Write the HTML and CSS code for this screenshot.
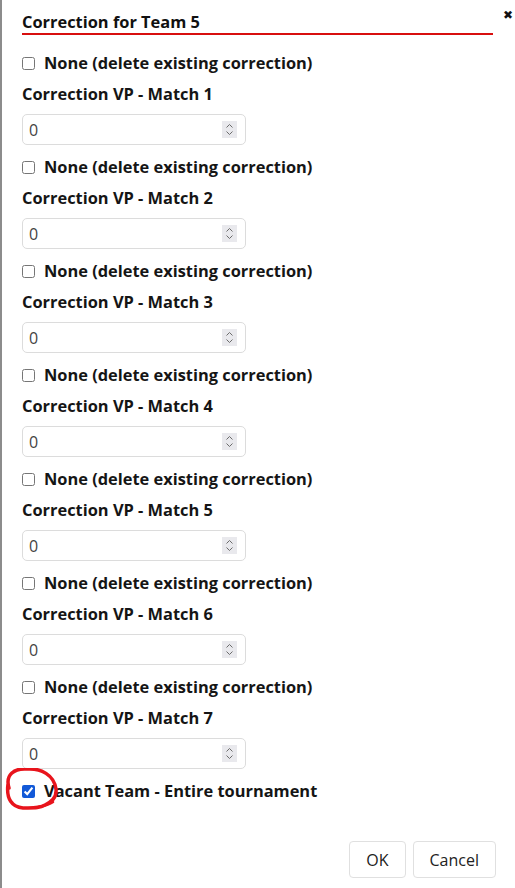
FILE: index.html
```html
<!DOCTYPE html>
<html>
<head>
<meta charset="utf-8">
<link rel="stylesheet" href="styles.css">
</head>
<body>
<div class="dialog">
  <div class="top">
    <h2 class="title">Correction for Team 5</h2>
    <span class="close">&#x2716;</span>
  </div>
  <div class="form">
    <div class="group">
      <label class="check"><input type="checkbox"> None (delete existing correction)</label>
      <div class="label">Correction VP - Match 1</div>
      <div class="num"><input type="text" value="0"><span class="spin"><svg width="9" height="13" viewBox="0 0 9 13"><path d="M1.5 4.5 L4.5 1.5 L7.5 4.5 M1.5 8.5 L4.5 11.5 L7.5 8.5" fill="none" stroke="#6b6b6b" stroke-width="1"/></svg></span></div>
    </div>
    <div class="group">
      <label class="check"><input type="checkbox"> None (delete existing correction)</label>
      <div class="label">Correction VP - Match 2</div>
      <div class="num"><input type="text" value="0"><span class="spin"><svg width="9" height="13" viewBox="0 0 9 13"><path d="M1.5 4.5 L4.5 1.5 L7.5 4.5 M1.5 8.5 L4.5 11.5 L7.5 8.5" fill="none" stroke="#6b6b6b" stroke-width="1"/></svg></span></div>
    </div>
    <div class="group">
      <label class="check"><input type="checkbox"> None (delete existing correction)</label>
      <div class="label">Correction VP - Match 3</div>
      <div class="num"><input type="text" value="0"><span class="spin"><svg width="9" height="13" viewBox="0 0 9 13"><path d="M1.5 4.5 L4.5 1.5 L7.5 4.5 M1.5 8.5 L4.5 11.5 L7.5 8.5" fill="none" stroke="#6b6b6b" stroke-width="1"/></svg></span></div>
    </div>
    <div class="group">
      <label class="check"><input type="checkbox"> None (delete existing correction)</label>
      <div class="label">Correction VP - Match 4</div>
      <div class="num"><input type="text" value="0"><span class="spin"><svg width="9" height="13" viewBox="0 0 9 13"><path d="M1.5 4.5 L4.5 1.5 L7.5 4.5 M1.5 8.5 L4.5 11.5 L7.5 8.5" fill="none" stroke="#6b6b6b" stroke-width="1"/></svg></span></div>
    </div>
    <div class="group">
      <label class="check"><input type="checkbox"> None (delete existing correction)</label>
      <div class="label">Correction VP - Match 5</div>
      <div class="num"><input type="text" value="0"><span class="spin"><svg width="9" height="13" viewBox="0 0 9 13"><path d="M1.5 4.5 L4.5 1.5 L7.5 4.5 M1.5 8.5 L4.5 11.5 L7.5 8.5" fill="none" stroke="#6b6b6b" stroke-width="1"/></svg></span></div>
    </div>
    <div class="group">
      <label class="check"><input type="checkbox"> None (delete existing correction)</label>
      <div class="label">Correction VP - Match 6</div>
      <div class="num"><input type="text" value="0"><span class="spin"><svg width="9" height="13" viewBox="0 0 9 13"><path d="M1.5 4.5 L4.5 1.5 L7.5 4.5 M1.5 8.5 L4.5 11.5 L7.5 8.5" fill="none" stroke="#6b6b6b" stroke-width="1"/></svg></span></div>
    </div>
    <div class="group">
      <label class="check"><input type="checkbox"> None (delete existing correction)</label>
      <div class="label">Correction VP - Match 7</div>
      <div class="num"><input type="text" value="0"><span class="spin"><svg width="9" height="13" viewBox="0 0 9 13"><path d="M1.5 4.5 L4.5 1.5 L7.5 4.5 M1.5 8.5 L4.5 11.5 L7.5 8.5" fill="none" stroke="#6b6b6b" stroke-width="1"/></svg></span></div>
    </div>
    <div class="vacant">
      <label class="check"><input type="checkbox" checked> Vacant Team - Entire tournament</label>
      <svg class="annot" width="64" height="52" viewBox="0 0 64 52"><path d="M9 20 C5 7, 14 0, 27 1 C41 0, 54 7, 56 21 C57 30, 51 34, 45 37 C40 40, 35 40, 28 40 C26 40, 25 40, 23 40 C12 39, 6 31, 8 16" fill="none" stroke="#e8141c" stroke-width="3.5" stroke-linecap="round" stroke-linejoin="round"/><path d="M38 39 C44 38, 49 37, 53 34" fill="none" stroke="#e8141c" stroke-width="2.5" stroke-linecap="round"/></svg>
    </div>
  </div>
  <div class="footer">
    <button class="btn">OK</button>
    <button class="btn">Cancel</button>
  </div>
</div>
</body>
</html>
```
FILE: styles.css
```css
html, body {
  margin: 0;
  padding: 0;
  background: #fff;
}
body {
  font-family: "Open Sans", "Liberation Sans", sans-serif;
  color: #1a1a1a;
}
.dialog {
  border-left: 2px solid #8c8c8c;
  min-height: 888px;
  box-sizing: border-box;
  padding: 11px 2px 0 20px;
}
.top {
  display: flex;
  align-items: flex-start;
  gap: 10px;
}
.title {
  flex: 1;
  margin: 0;
  font-size: 16.4px;
  line-height: 22px;
  font-weight: 700;
  border-bottom: 2px solid #d80f0f;
  color: #111;
}
.close {
  width: 10px;
  margin-top: -3px;
  font-family: "DejaVu Sans", sans-serif;
  font-size: 12px;
  font-weight: 700;
  color: #111;
}
.form {
  margin-top: 17px;
  display: flex;
  flex-direction: column;
  gap: 11px;
}
.group {
  display: flex;
  flex-direction: column;
  gap: 9px;
}
.check {
  display: flex;
  align-items: center;
  gap: 9px;
  font-size: 16.4px;
  line-height: 22px;
  font-weight: 700;
  color: #151515;
}
.check input {
  margin: 0;
  width: 13px;
  height: 13px;
  accent-color: #1259d8;
}
.label {
  font-size: 16.4px;
  line-height: 22px;
  font-weight: 700;
  color: #151515;
}
.num {
  position: relative;
  width: 224px;
  height: 31px;
}
.num input {
  box-sizing: border-box;
  width: 224px;
  height: 31px;
  margin: 0;
  border: 1px solid #dcdcdc;
  border-radius: 5px;
  padding: 0 6px;
  font-family: "Open Sans", "Liberation Sans", sans-serif;
  font-size: 16px;
  color: #444;
  background: #fff;
  outline: none;
}
.spin {
  position: absolute;
  right: 9px;
  top: 7px;
  width: 15px;
  height: 17px;
  background: #e9e9ed;
  display: flex;
  align-items: center;
  justify-content: center;
}
.vacant {
  position: relative;
}
.annot {
  position: absolute;
  left: -22px;
  top: -12px;
}
.footer {
  display: flex;
  justify-content: flex-end;
  gap: 7px;
  margin-top: 39px;
  margin-right: 17px;
}
.btn {
  height: 37px;
  padding: 0 16px;
  background: #fff;
  border: 1px solid #e0e0e0;
  border-radius: 4px;
  font-family: "Open Sans", "Liberation Sans", sans-serif;
  font-size: 16px;
  color: #222;
}
```
